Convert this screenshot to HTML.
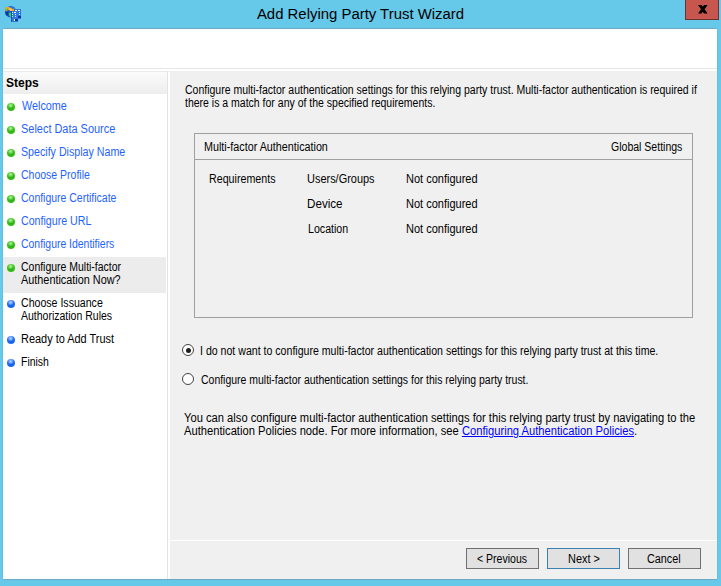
<!DOCTYPE html>
<html>
<head>
<meta charset="utf-8">
<style>html,body{margin:0;padding:0;}
body{width:721px;height:586px;position:relative;overflow:hidden;background:#66C9E9;font-family:"Liberation Sans",sans-serif;}
.t,.step{position:absolute;white-space:pre;font-size:12px;line-height:13px;color:#000;transform-origin:0 0;}
.link{color:#1f63ff;}
.a{color:#0000ff;text-decoration:underline;}
#title{position:absolute;left:1px;top:4px;width:719px;text-align:center;font-size:15.5px;line-height:20px;color:#000;white-space:pre;transform:scaleX(0.962);transform-origin:359.5px 0;}
#close{position:absolute;left:685px;top:0;width:32px;height:19px;background:#C7564E;border:1px solid #6e3030;border-top:none;}
#client{position:absolute;left:3px;top:29px;width:714px;height:550px;background:#fff;box-shadow:0 -1px 0 #70a6c2,0 1px 0 #70a6c2,-1px 0 0 #5cc3e6,1px 0 0 #5cc3e6;}
#hline1{position:absolute;left:3px;top:68px;width:714px;height:1px;background:#e6e6e6;}
#hline2{position:absolute;left:3px;top:71px;width:714px;height:1px;background:#ececec;}
#left{position:absolute;left:3px;top:72px;width:164px;height:507px;background:#fff;}
#leftborder{position:absolute;left:167px;top:71px;width:1px;height:508px;background:#e3e3e3;}
#steps-h{position:absolute;left:3px;top:72px;width:164px;height:22px;background:linear-gradient(#fbfbfb,#ededed);}
#right{position:absolute;left:170px;top:71px;width:547px;height:508px;background:#f0f0f0;}
#sep{position:absolute;left:170px;top:540px;width:547px;height:1px;background:#fff;}
.bul{position:absolute;left:7px;width:8px;height:8px;border-radius:50%;}
.g{background:radial-gradient(circle at 45% 30%,#b8f0a8 0,#6ad850 25%,rgba(60,200,40,0) 45%),radial-gradient(circle at 50% 55%,#28a810 0,#34b81a 45%,#44cc22 75%,#3cbf1e 100%);}
.b{background:radial-gradient(circle at 45% 30%,#b8d4ff 0,#6aa0ff 25%,rgba(40,120,255,0) 45%),radial-gradient(circle at 50% 55%,#1258e0 0,#1a66f0 45%,#2a78ff 75%,#226cf0 100%);}
#hl{position:absolute;left:3px;top:257px;width:163px;height:36px;background:#ececec;}
#box{position:absolute;left:194px;top:133px;width:497px;height:183px;border:1px solid #a0a0a0;}
#boxsep{position:absolute;left:195px;top:159px;width:497px;height:1px;background:#a0a0a0;}
.radio{position:absolute;left:182px;width:10px;height:10px;border-radius:50%;border:1px solid #444;background:#fff;}
.radio.on::after{content:"";position:absolute;left:2.5px;top:2.5px;width:5px;height:5px;border-radius:50%;background:#1f1f1f;}
.btn{position:absolute;top:548px;width:71px;height:19px;border:1px solid #707070;background:#e1e1e1;}
.btn.def{border-color:#3c7fb1;}
</style>
</head>
<body>
<div id="client"></div>
<div id="hline1"></div>
<div id="hline2"></div>
<div id="left"></div>
<div id="steps-h"></div>
<div id="leftborder"></div>
<div id="right"></div>
<div id="sep"></div>
<div id="title">Add Relying Party Trust Wizard</div>
<div id="close"><svg width="34" height="20" style="position:absolute;left:-1px;top:0"><path d="M13 5 L16.6 5 L22.6 13.6 L19 13.6 Z M19 5 L22.6 5 L16.6 13.6 L13 13.6 Z" fill="#000"/></svg></div>
<svg width="22" height="22" style="position:absolute;left:2px;top:2px" viewBox="0 0 22 22" shape-rendering="crispEdges">
<g shape-rendering="geometricPrecision">
<circle cx="8.6" cy="9.8" r="5.7" fill="#1d56c8"/>
<path d="M4.2 6.2 Q8 2.8 12.8 5.5 L13.5 7 L9 7.5 Z" fill="#2a7ad8"/>
<path d="M3.2 6 L6 4.5 L9 6 L11.5 7.2 L12.8 6.5 L12 10.5 L8.5 10.3 L9.5 9.2 L6.5 8 L3.5 9.5 Z" fill="#f4a41e"/>
<path d="M6.5 6 L9 7 L10.5 8.5 L8 8.5 Z" fill="#ffd27a"/>
<path d="M4.5 7 L6 6.5 L6.5 8 L5 8.7 Z" fill="#22cc33"/>
<path d="M6.5 11 L9.5 10.6 L11 14.8 L8.5 15.3 Q6.8 13.5 6.5 11 Z" fill="#22dd44"/>
<path d="M3.2 10 L6 9.5 L6.5 12 L5 14 Q3.3 12.2 3.2 10 Z" fill="#0c3aa8"/>
</g>
<rect x="12" y="7" width="7" height="10" fill="#2b74dc"/>
<rect x="9" y="9" width="7" height="11" fill="#2f7ae0"/>
<rect x="9" y="9" width="1" height="11" fill="#1c4fb8"/>
<rect x="10" y="10" width="1" height="1" fill="#e8f2ff"/><rect x="12" y="10" width="2" height="1" fill="#e8f2ff"/>
<rect x="10" y="12" width="1" height="1" fill="#e8f2ff"/><rect x="13" y="12" width="1" height="1" fill="#e8f2ff"/>
<rect x="10" y="14" width="1" height="1" fill="#c8dcff"/><rect x="13" y="14" width="1" height="1" fill="#c8dcff"/>
<rect x="13" y="8" width="2" height="1" fill="#e8f2ff"/><rect x="16" y="8" width="2" height="1" fill="#e8f2ff"/>
<rect x="17" y="10" width="1" height="1" fill="#e8f2ff"/><rect x="17" y="12" width="1" height="1" fill="#e8f2ff"/>
<rect x="12" y="17" width="1" height="2" fill="#e8f2ff"/>
<rect x="13" y="17" width="3" height="2" fill="#0b2f9a"/>
<rect x="16" y="14" width="3" height="2" fill="#0b2f9a"/>
</svg>
<div class="t" style="left:6px;top:77px;font-weight:bold;">Steps</div>
<div id="hl"></div>
<div class="bul g" style="top:103px"></div><div class="step link" style="left:22px;top:100px;transform:scaleX(0.9);">Welcome</div>
<div class="bul g" style="top:126px"></div><div class="step link" style="left:21px;top:123px;transform:scaleX(0.912);">Select Data Source</div>
<div class="bul g" style="top:149px"></div><div class="step link" style="left:21px;top:146px;transform:scaleX(0.888);">Specify Display Name</div>
<div class="bul g" style="top:172px"></div><div class="step link" style="left:21px;top:169px;transform:scaleX(0.875);">Choose Profile</div>
<div class="bul g" style="top:195px"></div><div class="step link" style="left:21px;top:192px;transform:scaleX(0.872);">Configure Certificate</div>
<div class="bul g" style="top:218px"></div><div class="step link" style="left:21px;top:215px;transform:scaleX(0.886);">Configure URL</div>
<div class="bul g" style="top:241px"></div><div class="step link" style="left:21px;top:238px;transform:scaleX(0.869);">Configure Identifiers</div>
<div class="bul g" style="top:264px"></div><div class="step" style="left:21px;top:261px;transform:scaleX(0.872);">Configure Multi-factor</div>
<div class="step" style="left:21px;top:274px;transform:scaleX(0.905);">Authentication Now?</div>
<div class="bul b" style="top:300px"></div><div class="step" style="left:21px;top:297px;transform:scaleX(0.882);">Choose Issuance</div>
<div class="step" style="left:21px;top:310px;transform:scaleX(0.875);">Authorization Rules</div>
<div class="bul b" style="top:336px"></div><div class="step" style="left:21px;top:333px;transform:scaleX(0.911);">Ready to Add Trust</div>
<div class="bul b" style="top:359px"></div><div class="step" style="left:21px;top:356px;transform:scaleX(0.871);">Finish</div>
<div class="t" style="left:185px;top:84px;transform:scaleX(0.875);">Configure multi-factor authentication settings for this relying party trust. Multi-factor authentication is required if
there is a match for any of the specified requirements.</div>
<div id="box"></div>
<div id="boxsep"></div>
<div class="t" style="left:204px;top:141px;transform:scaleX(0.897);">Multi-factor Authentication</div>
<div class="t" style="left:611px;top:141px;transform:scaleX(0.877);">Global Settings</div>
<div class="t" style="left:209px;top:173px;transform:scaleX(0.89);">Requirements</div>
<div class="t" style="left:307px;top:173px;transform:scaleX(0.913);">Users/Groups</div>
<div class="t" style="left:406px;top:173px;transform:scaleX(0.917);">Not configured</div>
<div class="t" style="left:307px;top:198px;transform:scaleX(0.97);">Device</div>
<div class="t" style="left:406px;top:198px;transform:scaleX(0.917);">Not configured</div>
<div class="t" style="left:308px;top:223px;transform:scaleX(0.886);">Location</div>
<div class="t" style="left:406px;top:223px;transform:scaleX(0.917);">Not configured</div>
<div class="radio on" style="top:344px"></div>
<div class="t" style="left:200px;top:345px;transform:scaleX(0.882);">I do not want to configure multi-factor authentication settings for this relying party trust at this time.</div>
<div class="radio" style="top:373px"></div>
<div class="t" style="left:201px;top:374px;transform:scaleX(0.872);">Configure multi-factor authentication settings for this relying party trust.</div>
<div class="t" style="left:184px;top:412px;transform:scaleX(0.932);">You can also configure multi-factor authentication settings for this relying party trust by navigating to the
Authentication Policies node. For more information, see <span class="a">Configuring Authentication Policies</span>.</div>
<div class="btn" style="left:466px"></div><div class="btn def" style="left:547px"></div><div class="btn" style="left:628px"></div>
<div class="t" style="left:477px;top:553px;transform:scaleX(0.877);">&lt; Previous</div>
<div class="t" style="left:568px;top:553px;transform:scaleX(0.91);">Next &gt;</div>
<div class="t" style="left:647px;top:553px;transform:scaleX(0.9);">Cancel</div>
</body>
</html>
